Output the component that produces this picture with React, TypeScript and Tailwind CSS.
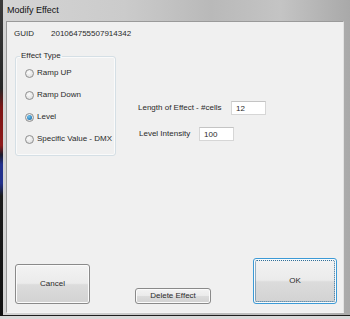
type RadioProps = { label: string; checked?: boolean };

function Radio({ label, checked }: RadioProps) {
  return (
    <div className="flex h-[10px] items-center gap-[3px]">
      <span className="flex h-[9px] w-[9px] items-center justify-center rounded-full border border-[#8f8f8f] bg-[radial-gradient(circle_at_40%_35%,#fbfbfb,#d6d6d6)]">
        {checked && (
          <span className="h-[5px] w-[5px] rounded-full bg-[radial-gradient(circle_at_40%_35%,#6fc3ef,#0d5f9e)]" />
        )}
      </span>
      <span>{label}</span>
    </div>
  );
}

function Field({ label, value, labelWidth, indent }: { label: string; value: string; labelWidth: string; indent?: boolean }) {
  return (
    <div className={`flex h-[14px] items-center ${indent ? "pl-[1px]" : ""}`}>
      <span className={labelWidth}>{label}</span>
      <input
        readOnly
        value={value}
        className="h-[14px] w-[35px] border border-[#d6d6d6] border-t-[#c4c4c4] bg-white pl-[4px] text-[8px] text-[#2a2a2a] outline-none"
      />
    </div>
  );
}

const btn =
  "flex items-center justify-center rounded-[3px] border bg-[linear-gradient(to_bottom,#f3f3f3_0%,#ebebeb_48%,#dcdcdc_52%,#d2d2d2_100%)] shadow-[inset_0_0_0_1px_#fbfbfb] text-[#2a2a2a]";

export default function App() {
  return (
    <div className="flex h-[319px] w-[350px] flex-col bg-[#d9d9d9] font-['Liberation_Sans',Arial,sans-serif] text-[8px] text-[#2a2a2a]">
      <div className="flex flex-1">
        {/* desktop showing through the glass edge */}
        <div className="w-[3px] bg-[linear-gradient(to_bottom,#3c3c3c_0%,#262626_28%,#7c1414_34%,#8e1a1a_46%,#1a1a2a_49%,#22308c_52%,#22308c_58%,#1b1b1b_62%,#111111_100%)]" />
        <div className="flex flex-1 flex-col border-b border-b-[#1e1e1e] bg-[linear-gradient(to_right,#d4d4d4_0%,#cbcbcb_35%,#b9b9b9_60%,#c4c4c4_80%,#a9a9a9_100%)]">
          <div className="flex h-[21px] items-center pl-[4px] text-[9px] text-[#111]">Modify Effect</div>

          <div className="flex flex-1 pb-[2px] pl-[3px] pr-[6px]">
            <div className="flex flex-1 flex-col border border-[#9a9a9a] border-b-[#f4f4f4] border-r-[#e2e2e2] bg-[#f0f0f0]">
              {/* GUID */}
              <div className="mt-[7px] flex h-[10px] items-center pl-[7px]">
                <span className="w-[37px]">GUID</span>
                <span>201064755507914342</span>
              </div>

              <div className="mt-[12px] flex">
                <fieldset className="ml-[8px] h-[105px] w-[101px] rounded-[3px] border border-[#d5dfe5] shadow-[inset_0_0_0_1px_#fafafa]">
                  <legend className="ml-[4px] h-[10px] px-[1px] leading-[10px]">Effect Type</legend>
                  <div className="flex flex-col gap-[12px] pl-[9px] pt-[7px]">
                    <Radio label="Ramp UP" />
                    <Radio label="Ramp Down" />
                    <Radio label="Level" checked />
                    <Radio label="Specific Value - DMX" />
                  </div>
                </fieldset>

                <div className="ml-[22px] mt-[50px] flex flex-col gap-[12px]">
                  <Field label="Length of Effect - #cells" value="12" labelWidth="w-[93px]" />
                  <Field label="Level Intensity" value="100" labelWidth="w-[60px]" indent />
                </div>
              </div>

              <div className="mt-auto flex items-end pb-[8px] pl-[8px]">
                <button className={`${btn} h-[40px] w-[75px] border-[#8a8a8a]`}>Cancel</button>
                <button className={`${btn} ml-[45px] h-[16px] w-[76px] border-[#8a8a8a]`}>Delete Effect</button>
                <button className={`${btn} relative ml-[42px] h-[46px] w-[84px] border-[#3c9ad6]`}>
                  <span className="absolute inset-[1px] rounded-[2px] border border-dotted border-[#2f6f9a]" />
                  OK
                </button>
              </div>
            </div>
          </div>
        </div>
      </div>
      <div className="h-[3px]" />
    </div>
  );
}
